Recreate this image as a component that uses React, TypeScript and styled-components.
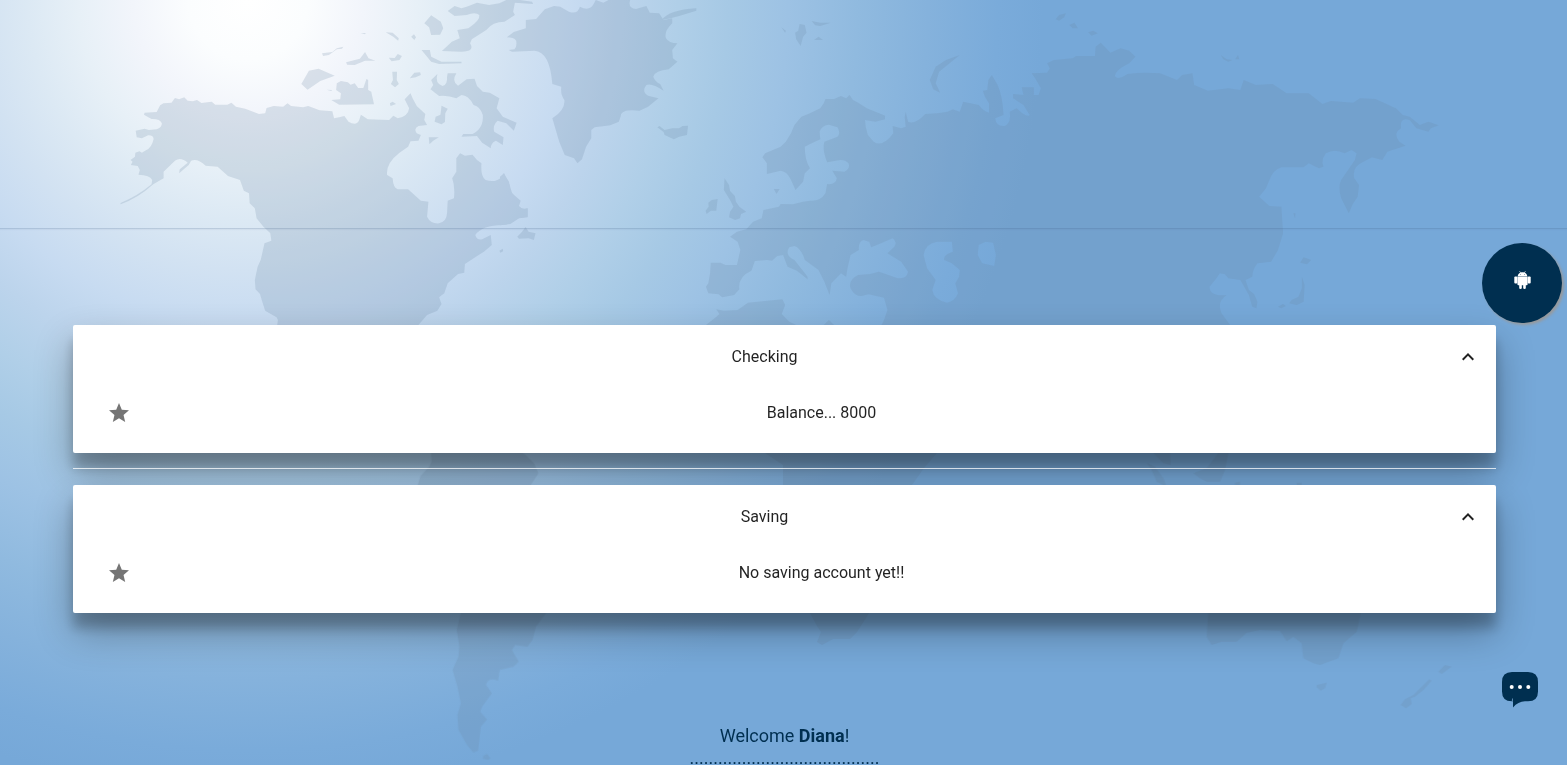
import React from "react";
import styled, { createGlobalStyle } from "styled-components";
import { MdExpandLess, MdStar } from "react-icons/md";

const NAVY = "#002f50";

const GlobalStyle = createGlobalStyle`
  html, body { margin: 0; padding: 0; height: 100%; overflow: hidden; }
  body { font-family: Roboto, "Liberation Sans", sans-serif; color: rgba(0, 0, 0, 0.87); }
  * { box-sizing: border-box; }
`;

const Page = styled.div`
  position: relative;
  display: flex;
  flex-direction: column;
  height: 765px;
  overflow: hidden;
  background: radial-gradient(
    circle 820px at 248px 0px,
    #ffffff 0px, #fbfdfe 60px, #f2f5fb 115px, #e7f0f7 170px, #dce9f4 220px, #d2e2f2 270px,
    #c7dbf1 325px, #bcd4ec 375px, #b0cfe8 430px, #a6c9e5 480px, #9dc2e4 540px,
    #90badf 610px, #85b2dc 680px, #7aabda 750px, #76a8d8 795px
  );
`;

const MapArt = styled.svg`
  position: absolute;
  inset: 0;
`;

const Header = styled.header`
  position: relative;
  flex: none;
  height: 229px;
  border-bottom: 1px solid rgba(60, 90, 130, 0.2);
  box-shadow: 0 1px 1px rgba(60, 90, 130, 0.06);
`;

const Main = styled.main`
  position: relative;
  flex: none;
  display: flex;
  flex-direction: column;
  padding: 96px 71px 0 73px;
`;

const Card = styled.section`
  height: 128px;
  padding: 8px 0;
  display: flex;
  flex-direction: column;
  gap: 8px;
  background: #fff;
  border-radius: 2px;
  box-shadow: 0 19px 38px rgba(0, 0, 0, 0.3), 0 15px 12px rgba(0, 0, 0, 0.22);
`;

const Row = styled.div<{ $nested?: boolean }>`
  display: flex;
  align-items: center;
  height: 48px;
  padding: 0 16px 0 ${(p) => (p.$nested ? 34 : 16)}px;
`;

const Label = styled.span`
  flex: 1;
  text-align: center;
  font-size: 16px;
  line-height: 24px;
`;

const IconSlot = styled.span<{ $side: "start" | "end" }>`
  display: flex;
  width: ${(p) => (p.$side === "start" ? 56 : 40)}px;
  justify-content: ${(p) => (p.$side === "start" ? "flex-start" : "flex-end")};
  color: ${(p) => (p.$side === "start" ? "#757575" : "#212121")};
`;

const Divider = styled.hr`
  width: 100%;
  height: 1px;
  margin: 15px 0 16px;
  border: 0;
  background: rgba(255, 255, 255, 0.76);
`;

const Welcome = styled.footer`
  display: flex;
  flex-direction: column;
  align-items: center;
  padding-top: 112px;
  font-size: 18px;
  line-height: 22px;
  color: ${NAVY};
  white-space: nowrap;
`;

const Greeting = styled.div`
  line-height: 22px;
`;

const AndroidButton = styled.button`
  position: absolute;
  top: 243px;
  right: 5px;
  width: 80px;
  height: 80px;
  padding: 0 0 6px 1px;
  display: flex;
  align-items: center;
  justify-content: center;
  border: 0;
  border-radius: 50%;
  background: ${NAVY};
  box-shadow: 2px 2px 3px #999;
`;

const ChatButton = styled.button`
  position: absolute;
  top: 672px;
  right: 29px;
  width: 36px;
  height: 36px;
  padding: 0;
  border: 0;
  background: none;
  display: flex;
`;

const WorldMap = () => (
  <MapArt width="1567" height="765" viewBox="0 0 1567 765" aria-hidden>
    <g fill="#6d88a3" fillRule="evenodd" opacity="0.21">
      {/* North America and the Arctic islands */}
      <g transform="scale(.34439 .33333)">
        <path d="M350 609Q400 588 440 553L442 540Q435 525 402 524L406 510L400 498L380 495L385 485L379 480L392 470L393 458L405 454L412 458L425 450Q440 444 446 418Q446 405 430 406L412 415L397 412L394 392L420 386L432 390L455 388Q470 384 470 370Q465 356 440 357L418 344L420 338L455 336L465 316L475 310L498 308L508 294L520 298L535 292L545 302L560 304L572 300L585 309L615 305L625 314L660 314L672 308L685 320L712 326L752 342L770 340L774 324L795 318L822 320L835 310L845 318L880 322L895 318L928 331L965 334L970 355L985 352L1000 348L1012 365Q1035 380 1043 360L1048 344L1068 358L1130 360L1142 347L1155 355Q1185 350 1188 325L1175 298L1192 280L1198 295L1210 318L1235 342L1232 360L1240 375L1215 378Q1200 385 1210 400L1222 405L1215 422L1192 424L1185 440L1160 458Q1120 490 1124 525L1140 535Q1142 565 1155 568L1185 568L1222 602L1244 605L1240 650Q1250 672 1275 670Q1297 665 1298 640L1300 602L1318 595Q1322 560 1313 535L1325 515L1325 475L1336 460L1350 467L1372 464L1385 480L1398 490Q1395 530 1410 540Q1440 550 1457 530L1462 520L1478 545L1482 572L1495 590L1495 602L1510 602L1505 618Q1515 630 1532 625L1532 650L1505 655Q1480 675 1460 675Q1400 675 1380 705Q1385 722 1400 718L1425 705L1428 735L1405 755L1382 770L1350 792L1348 818L1330 822L1300 850L1290 880L1275 892L1282 912L1270 932L1240 945L1215 975L805 975L807 960L803 952L770 932L760 900L755 882L742 868L740 840L748 800L757 780L768 730L788 722L785 700L765 680L745 655L740 625L725 610L723 580L708 572L697 540L662 528L632 500L597 497Q575 475 555 482L548 495L520 520L522 508L545 488Q525 470 508 482L475 515L475 535L445 553Q400 595 350 613Z" />
        <path d="M1252 240L1270 222Q1262 250 1285 258Q1300 255 1298 230L1300 220L1325 220Q1310 245 1330 257L1355 238L1378 236L1385 258L1402 275L1422 278L1450 295L1442 325L1460 350L1500 368L1492 392L1470 370L1445 362Q1430 375 1435 395L1462 412L1460 435L1440 422Q1425 428 1425 445L1400 428L1385 408L1340 410L1345 402L1372 402Q1405 385 1402 345Q1395 320 1375 315Q1360 285 1340 285L1325 295Q1300 285 1275 288L1250 268L1258 255Z" />
        <path d="M1300 33L1320 18L1340 25L1355 20L1385 8L1420 15L1450 10L1470 0L1510 0L1545 5L1548 12L1495 8L1490 35L1495 45L1465 65Q1430 65 1412 90L1370 118L1365 130Q1380 155 1340 155L1283 153L1312 125L1335 115L1328 90L1360 85Q1395 60 1392 45Q1380 35 1355 45L1320 48Z" />
        <path d="M1232 70L1252 46L1280 65L1287 85L1278 104L1252 105L1246 82ZM1224 150L1248 150L1252 170L1282 185L1340 185L1340 190L1275 192L1252 185ZM875 252L897 212L925 206L972 227L930 243L893 269ZM935 160L965 156L978 145L997 140L993 146L978 148L955 165L938 168ZM1005 187L1045 176L1060 156L1070 175L1090 182L1060 182L1030 195L1008 194ZM1129 173L1146 174L1155 162L1167 168L1160 180L1137 184ZM1139 215L1153 215L1152 240L1158 252L1147 262L1135 252L1141 240ZM1190 235L1203 218L1220 217L1222 225L1207 232ZM978 250L990 243L1010 247L1018 254L1030 250L1040 264L1055 264L1064 237L1069 240L1069 270L1078 275L1086 313L985 314L962 300L988 298L990 280L976 270ZM1282 317L1300 326L1293 340L1292 366L1282 373L1262 365L1265 350L1279 344ZM1245 412L1274 412L1258 422L1247 433ZM1120 97L1140 98L1158 115L1156 122L1142 110ZM1194 110L1202 103L1208 112L1203 120ZM1132 310L1140 305L1150 312L1134 318ZM1502 710L1516 695L1526 681L1535 695L1555 700L1550 720L1535 715L1507 716ZM1450 752L1460 746L1461 754L1453 758ZM1047 99L1062 99L1060 103ZM948 269L964 270L962 273Z" />
      </g>
      {/* Greenland, Iceland, Europe */}
      <g transform="translate(500 0) scale(.34439 .33333)">
        <path d="M20 112L40 96L75 85L75 60L105 57L130 28L157 18L175 20L200 35Q225 45 232 20Q260 35 272 12L278 0L300 8L315 0L378 0Q370 25 395 27L425 18L435 38L462 40L475 60L500 55L500 70Q475 95 482 115Q490 130 515 130L500 150L502 175L515 185L490 208Q450 212 445 230Q450 245 465 252L475 272Q440 248 425 255Q410 275 430 287L460 295L430 320L405 332Q350 325 350 350L345 365L320 376L275 382L265 390L265 415L250 440L238 478L225 490L215 475L188 465L172 425L152 355Q190 330 187 300Q175 285 178 260L152 252Q145 155 100 152L35 155L25 150L42 148Q50 140 47 122Q40 112 20 112Z" />
        <path d="M470 60Q490 30 570 25L570 32L520 48L495 55ZM457 382L463 378L478 390L500 385L520 385L530 378L546 377L543 405L520 410L505 418L478 405L475 396ZM817 82L830 92L828 98ZM857 98L866 92L870 72L885 75L890 98L880 110L873 138L860 118ZM905 63L930 68L960 68L930 78L915 76ZM912 120L925 110L938 120ZM1248 240L1265 200L1295 180L1335 165L1275 215L1265 250L1278 278L1258 268ZM652 535L665 555L668 573L682 588L685 605L695 620L715 635L700 642L697 655L683 660L665 652L668 635L678 620L668 600L650 570ZM615 600L632 597L628 632L612 632L600 642L597 632L606 620L605 608ZM795 567L812 567L803 582ZM0 530L12 520L28 555L35 580L60 602L55 618L68 630L80 625L80 652L55 655L30 672L0 676Z" />
        <path d="M1550 262L1515 262L1520 285L1490 282L1490 295L1520 315L1538 345Q1530 355 1500 325L1480 335Q1485 370 1465 378Q1440 380 1438 355L1462 345Q1460 290 1445 255L1428 225L1418 240L1415 270L1402 272L1408 290L1420 310L1420 338Q1405 335 1390 315L1345 305L1335 335L1315 328L1300 335L1270 340L1235 342Q1205 375 1185 365L1178 335L1175 352L1178 380L1165 385L1140 378L1142 400L1130 415Q1105 440 1085 425L1068 405Q1060 380 1060 360L1090 365L1118 358L1118 347L1065 325L1040 308L1025 300L1015 285L1005 295L990 288L970 297L945 297L940 310L930 325L900 340L875 350L855 375L845 400L830 425L815 440L770 460L762 472L775 490L775 522L815 512Q835 515 845 540L858 570L880 545L885 520L900 505Q885 480 885 440L905 430L930 418L928 395Q935 375 955 374L980 382Q990 400 980 410L942 425Q935 450 950 487L975 482Q1000 475 1012 490Q1018 505 1000 515L965 512L978 535Q975 555 950 552L945 580Q930 605 900 602L880 605L850 613L815 612L810 620L765 630L760 655L735 665L715 688L688 695L668 710L690 725L698 750L688 795L655 795L640 788L612 788L610 820L605 850L598 860L605 880L635 883L645 892L680 885L695 868Q690 830 730 812L740 783L775 780L790 782L805 768L822 765L835 800L862 812L893 838L893 830Q870 800 855 780Q825 765 840 742L855 738Q875 745 885 780L925 810L942 845L957 885L962 850L990 820L1005 830L1010 800L1018 765L1042 750Q1040 725 1055 720L1072 725L1078 742L1140 715Q1155 725 1145 740L1125 760L1165 785L1185 815Q1180 840 1150 833L1100 815L1075 822L1040 825Q1010 840 1018 865Q1030 890 1050 888L1070 883L1115 893L1125 930L1115 960L1108 975L1550 975ZM1230 765Q1235 730 1270 725L1312 725L1315 755Q1285 765 1290 780L1312 790L1335 810L1333 830L1322 850L1330 880Q1320 905 1298 908Q1260 900 1255 870L1265 840L1240 805ZM1390 735L1410 725L1432 728L1440 765L1435 798L1400 790L1387 765Z" />
        <path d="M598 975L625 953L637 942L628 928L650 932L690 930L720 908L820 898L828 915L818 942L840 965L860 975ZM940 975L955 960L970 975Z" />
      </g>
      {/* Asia */}
      <g transform="translate(1030 0) scale(.342 .33333)">
        <path d="M5 220L50 218L58 205L50 190L70 180L125 175L135 168L190 168L192 140L207 128L235 158L265 145L290 152L308 170L290 190Q250 210 248 228Q255 243 285 222Q330 215 380 220L430 240L445 225L475 220L480 255L520 272L580 265L615 270L625 240L660 255L710 252L750 280L815 280L855 312L880 303L945 308L965 295L1010 297L1070 325L1090 345L1110 350L1140 375L1165 365L1195 376L1172 385L1165 395L1130 385L1110 360Q1080 350 1085 385Q1060 400 1080 425L1098 437L1045 455L1030 480L1000 472L975 485Q940 500 948 535L962 555L958 590L945 610L932 640L910 595Q900 560 910 540L950 480L955 460L940 450L920 460Q890 445 865 460Q850 480 858 500L845 505L815 490L800 502L735 502Q710 510 700 540L690 565L670 590L700 618L735 620L740 700L725 750L705 785L665 790Q650 810 650 830L630 840L640 870L655 882L665 905L662 925L650 920L640 885L615 840L580 835L570 823L555 820L545 835L525 860Q525 890 575 885Q545 905 560 940L585 975L0 975L0 285L25 285L32 265L15 235Z" />
        <path d="M75 58L85 45L105 40L100 52L85 62ZM115 75L130 68L140 85L125 85ZM170 97L185 92L198 100L180 107ZM558 165L575 178L592 180L580 185L565 178ZM600 178L608 165L612 178ZM790 788L800 772L822 780L810 793ZM795 830L803 855L800 905L780 915L758 910L765 900L785 890L795 865ZM725 920L740 912L748 918L735 925ZM770 640L776 640L775 655Z" />
      </g>
      {/* South America */}
      <g transform="translate(40 440) scale(.34439 .33333)">
        <path d="M1135 38L1137 65L1130 80L1105 108L1097 135L1222 519L1210 570L1218 620L1215 650L1198 690L1212 740L1222 790L1212 825L1215 870L1240 915L1258 937L1272 932L1280 860L1298 838L1278 815L1285 798L1312 760L1295 735Q1300 710 1330 722L1335 690L1375 680L1390 665L1370 630L1380 615L1415 620L1430 600L1440 560L1470 519L1425 135L1447 100L1435 70L1410 45L1400 38ZM1288 947L1298 942L1308 955L1300 960L1286 956Z" />
      </g>
      {/* Southern Africa */}
      <path d="M765 453L937 453L924 468L912 485L869 613L866 618L857 632L850 639L833 639L822 645L817 642L821 632L817 626L810 613L783 485L783 465Z" />
      {/* Australia and south-east Asia */}
      <g transform="translate(1140 440) scale(.33333)">
        <path d="M205 519L200 590L215 615L245 605L290 605L320 578L360 570L420 572L440 604L460 590L485 610L490 655L520 670L540 675L595 655L610 610L650 575L662 519ZM530 735L560 728L555 745L542 752L530 742ZM895 695L915 675L935 680L905 702ZM868 718L875 722L850 750L825 770L812 775L815 792L798 805L782 795L795 778L820 765L845 740ZM20 68L45 80L70 115L80 140L50 125L35 90ZM40 39L90 39L92 75L70 70ZM160 100L200 85L235 39L265 39L255 90L240 125L200 125L180 115ZM285 128L300 125L300 135L285 135ZM470 128L485 128L485 135L470 135Z" />
      </g>
    </g>
  </MapArt>
);

const AndroidIcon = () => (
  <svg width="17" height="18" viewBox="0 0 17 18" fill="#fff" aria-hidden>
    <path d="M3.7 5.3C3.9 3.3 5 2.3 6.2 1.7L5.4.4L5.8.1L6.7 1.5C7.8 1.1 9.2 1.1 10.3 1.5L11.2.1L11.6.4L10.8 1.7C12 2.3 13.1 3.3 13.3 5.3ZM6.4 3a.4.4 0 1 0 0 .8a.4.4 0 1 0 0-.8M10.6 3a.4.4 0 1 0 0 .8a.4.4 0 1 0 0-.8" fillRule="evenodd" />
    <path d="M3.4 5.6H13.6V13.2Q13.6 14.2 12.6 14.2H11.8V17Q11.8 18 10.6 18Q9.2 18 9.2 17V14.2H7.8V17Q7.8 18 6.4 18Q5.2 18 5.2 17V14.2H4.4Q3.4 14.2 3.4 13.2Z" />
    <rect x=".3" y="5.6" width="3" height="7" rx="1" />
    <rect x="13.7" y="5.6" width="3" height="7" rx="1" />
  </svg>
);

const ChatIcon = () => (
  <svg width="36" height="36" viewBox="0 0 36 36" aria-hidden>
    <path d="M10 0H26Q36 0 36 10V19.5Q36 29.3 26 29.3H23Q16 29.5 11 35.5V29.3H9.8Q0 29.3 0 19.5V10Q0 0 10 0Z" fill={NAVY} />
    <path d="M9.8 29.6L10 27L11 26V29.6Z" fill="#5a88b0" />
    <g fill="#fff">
      <circle cx="9.7" cy="15" r="2" />
      <circle cx="18" cy="15" r="2" />
      <circle cx="26.3" cy="15" r="2" />
    </g>
  </svg>
);

const AccountCard = ({ title, detail }: { title: string; detail: string }) => (
  <Card>
    <Row>
      <Label>{title}</Label>
      <IconSlot $side="end"><MdExpandLess size={24} /></IconSlot>
    </Row>
    <Row $nested>
      <IconSlot $side="start"><MdStar size={24} /></IconSlot>
      <Label>{detail}</Label>
    </Row>
  </Card>
);

export default function App() {
  return (
    <>
      <GlobalStyle />
      <Page>
        <WorldMap />
        <Header />
        <Main>
          <AccountCard title="Checking" detail="Balance... 8000" />
          <Divider />
          <AccountCard title="Saving" detail="No saving account yet!!" />
          <Welcome>
            <Greeting>Welcome <b>Diana</b>!</Greeting>
            <div>{".".repeat(40)}</div>
          </Welcome>
        </Main>
        <AndroidButton aria-label="Android"><AndroidIcon /></AndroidButton>
        <ChatButton aria-label="Chat"><ChatIcon /></ChatButton>
      </Page>
    </>
  );
}
